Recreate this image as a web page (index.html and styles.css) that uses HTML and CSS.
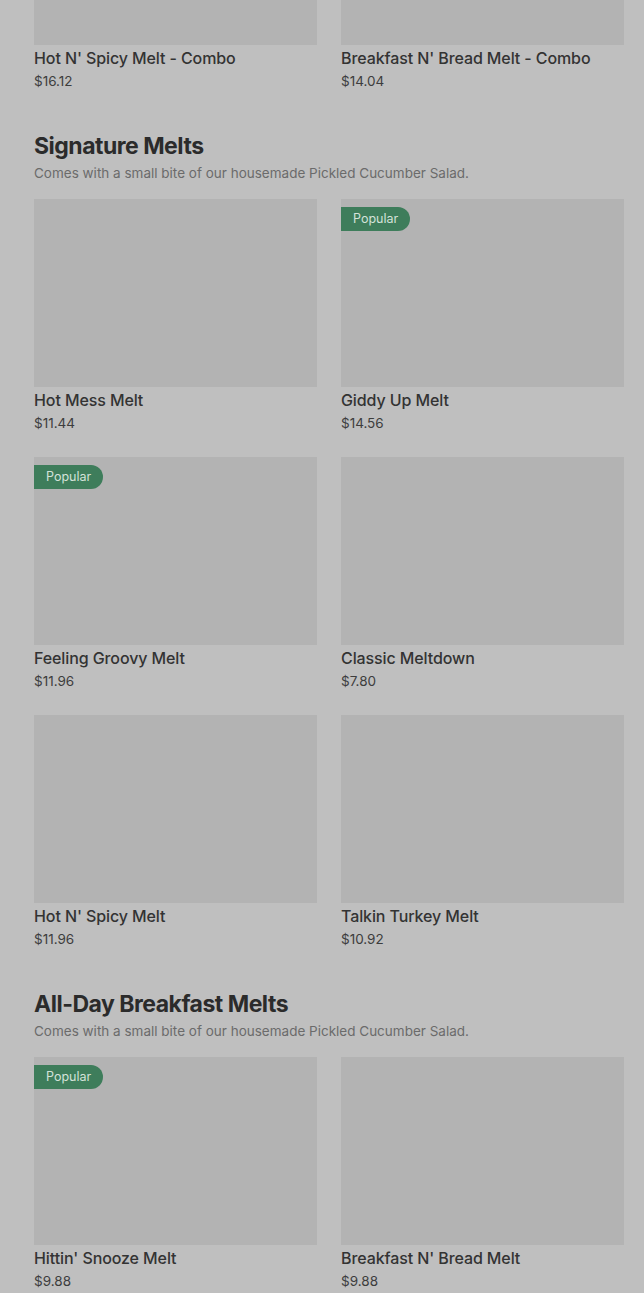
FILE: index.html
```html
<!DOCTYPE html>
<html lang="en">

<head>
    <meta charset="UTF-8">
    <meta name="viewport" content="width=device-width, initial-scale=1.0">
    <title>Menu</title>
    <link rel="stylesheet" href="styles.css">
</head>

<body>
    <div class="menu">
        <section class="category first">
            <div class="grid">
                <div class="item">
                    <div class="photo"></div>
                    <div class="name">Hot N' Spicy Melt - Combo</div>
                    <div class="price">$16.12</div>
                </div>
                <div class="item">
                    <div class="photo"></div>
                    <div class="name">Breakfast N' Bread Melt - Combo</div>
                    <div class="price">$14.04</div>
                </div>
            </div>
        </section>

        <section class="category">
            <h2>Signature Melts</h2>
            <p class="desc">Comes with a small bite of our housemade Pickled Cucumber Salad.</p>
            <div class="grid">
                <div class="item">
                    <div class="photo"></div>
                    <div class="name">Hot Mess Melt</div>
                    <div class="price">$11.44</div>
                </div>
                <div class="item">
                    <div class="photo"><span class="badge">Popular</span></div>
                    <div class="name">Giddy Up Melt</div>
                    <div class="price">$14.56</div>
                </div>
                <div class="item">
                    <div class="photo"><span class="badge">Popular</span></div>
                    <div class="name">Feeling Groovy Melt</div>
                    <div class="price">$11.96</div>
                </div>
                <div class="item">
                    <div class="photo"></div>
                    <div class="name">Classic Meltdown</div>
                    <div class="price">$7.80</div>
                </div>
                <div class="item">
                    <div class="photo"></div>
                    <div class="name">Hot N' Spicy Melt</div>
                    <div class="price">$11.96</div>
                </div>
                <div class="item">
                    <div class="photo"></div>
                    <div class="name">Talkin Turkey Melt</div>
                    <div class="price">$10.92</div>
                </div>
            </div>
        </section>

        <section class="category">
            <h2>All-Day Breakfast Melts</h2>
            <p class="desc">Comes with a small bite of our housemade Pickled Cucumber Salad.</p>
            <div class="grid">
                <div class="item">
                    <div class="photo"><span class="badge">Popular</span></div>
                    <div class="name">Hittin' Snooze Melt</div>
                    <div class="price">$9.88</div>
                </div>
                <div class="item">
                    <div class="photo"></div>
                    <div class="name">Breakfast N' Bread Melt</div>
                    <div class="price">$9.88</div>
                </div>
            </div>
        </section>
    </div>
</body>

</html>
```

FILE: styles.css
```css
body {
    font-family: Inter, "Liberation Sans", Arial, sans-serif;
    background-color: #bfbfbf;
    margin: 0;
    padding: 0;
    overflow: hidden;
}

.menu {
    padding: 0 20px 0 34px;
}

.category {
    margin-top: 41px;
}

.category.first {
    margin-top: -143px;
}

h2 {
    margin: 0;
    font-size: 23px;
    line-height: 28px;
    font-weight: 700;
    letter-spacing: -0.5px;
    color: #2b2b2b;
}

.desc {
    margin: 3px 0 16px;
    font-size: 13.5px;
    line-height: 20px;
    color: #6b6b6b;
}

.grid {
    display: grid;
    grid-template-columns: 1fr 1fr;
    column-gap: 24px;
    row-gap: 24px;
}

.photo {
    position: relative;
    height: 188px;
    background-color: #b3b3b3;
}

.badge {
    position: absolute;
    top: 8px;
    left: 0;
    height: 24px;
    line-height: 24px;
    padding: 0 12px;
    border-radius: 0 12px 12px 0;
    background-color: #3e7d5b;
    color: #d3e2d9;
    font-size: 12.5px;
}

.name {
    margin-top: 3px;
    font-size: 16px;
    line-height: 20px;
    font-weight: 500;
    letter-spacing: -0.1px;
    color: #333;
}

.price {
    margin-top: 3px;
    font-size: 13.5px;
    line-height: 20px;
    color: #3d3d3d;
}
```
